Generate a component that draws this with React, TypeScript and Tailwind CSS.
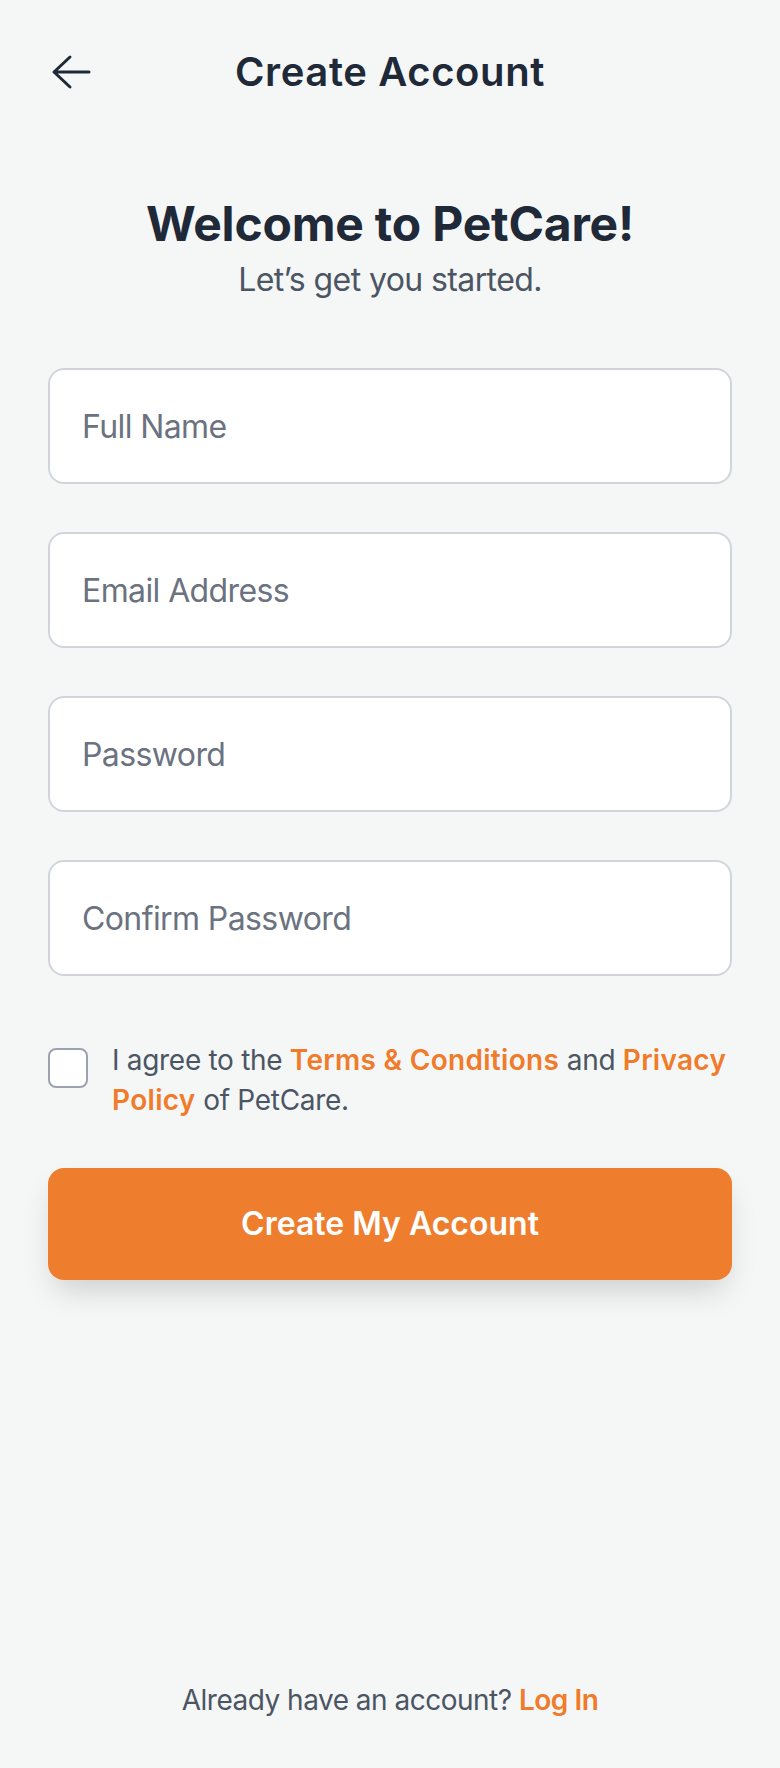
import { useState } from "react";

const fields = [
  { id: "name", placeholder: "Full Name", type: "text" },
  { id: "email", placeholder: "Email Address", type: "email" },
  { id: "password", placeholder: "Password", type: "password" },
  { id: "confirm", placeholder: "Confirm Password", type: "password" },
];

function BackArrow() {
  return (
    <svg width="48" height="48" viewBox="0 0 48 48" fill="none">
      <path
        d="M41 24H6M22 9L6 24l16 15"
        stroke="#1F2937"
        strokeWidth="3"
        strokeLinecap="round"
        strokeLinejoin="round"
      />
    </svg>
  );
}

export default function App() {
  const [values, setValues] = useState<Record<string, string>>({});
  const [agreed, setAgreed] = useState(false);

  return (
    <div className="flex min-h-screen flex-col bg-[#F5F7F7] font-['Inter',sans-serif] text-[#1F2937]">
      <header className="flex h-[80px] items-center px-12 mt-8">
        <button className="flex h-[48px] w-[48px] items-center justify-center">
          <BackArrow />
        </button>
        <h1 className="flex-1 text-center text-[40px] leading-[56px] font-semibold tracking-[0.6px]">
          Create Account
        </h1>
        <div className="w-[48px]" />
      </header>

      <main className="px-12">
        <div className="mt-[80px] text-center">
          <h2 className="text-[48px] leading-[64px] font-bold tracking-[-0.2px]">
            Welcome to PetCare!
          </h2>
          <p className="text-[32px] leading-[48px] text-[#4B5563] tracking-[-0.6px]">
            Let’s get you started.
          </p>
        </div>

        <div className="mt-[64px] flex flex-col gap-[48px]">
          {fields.map((f) => (
            <input
              key={f.id}
              type={f.type}
              placeholder={f.placeholder}
              value={values[f.id] ?? ""}
              onChange={(e) => setValues({ ...values, [f.id]: e.target.value })}
              className="h-[116px] w-full rounded-[16px] border-2 border-[#D1D5DB] bg-white px-8 text-[32px] leading-[48px] tracking-[-0.6px] text-[#1F2937] placeholder:text-[#6B7280] focus:outline-none"
            />
          ))}
        </div>

        <label className="mt-[64px] flex items-start gap-6">
          <input
            type="checkbox"
            checked={agreed}
            onChange={(e) => setAgreed(e.target.checked)}
            className="mt-[8px] h-[40px] w-[40px] shrink-0 appearance-none rounded-[8px] border-2 border-[#9CA3AF] bg-white"
          />
          <span className="text-[28px] leading-[40px] tracking-[-0.3px] text-[#4B5563]">
            I agree to the{" "}
            <span className="font-semibold tracking-[0.3px] text-[#F07B2B]">Terms &amp; Conditions</span> and{" "}
            <span className="font-semibold tracking-[0.3px] text-[#F07B2B]">Privacy Policy</span> of PetCare.
          </span>
        </label>

        <button className="mt-[48px] h-[112px] w-full rounded-[16px] bg-[#EF7D2E] text-[32px] font-semibold text-white shadow-[0_16px_32px_-8px_rgba(0,0,0,0.18)]">
          Create My Account
        </button>
      </main>

      <div className="flex-1" />

      <footer className="pb-12 text-center text-[28px] leading-[40px] tracking-[-0.5px] text-[#4B5563]">
        Already have an account?{" "}
        <a className="font-semibold text-[#F07B2B]">Log In</a>
      </footer>
    </div>
  );
}
